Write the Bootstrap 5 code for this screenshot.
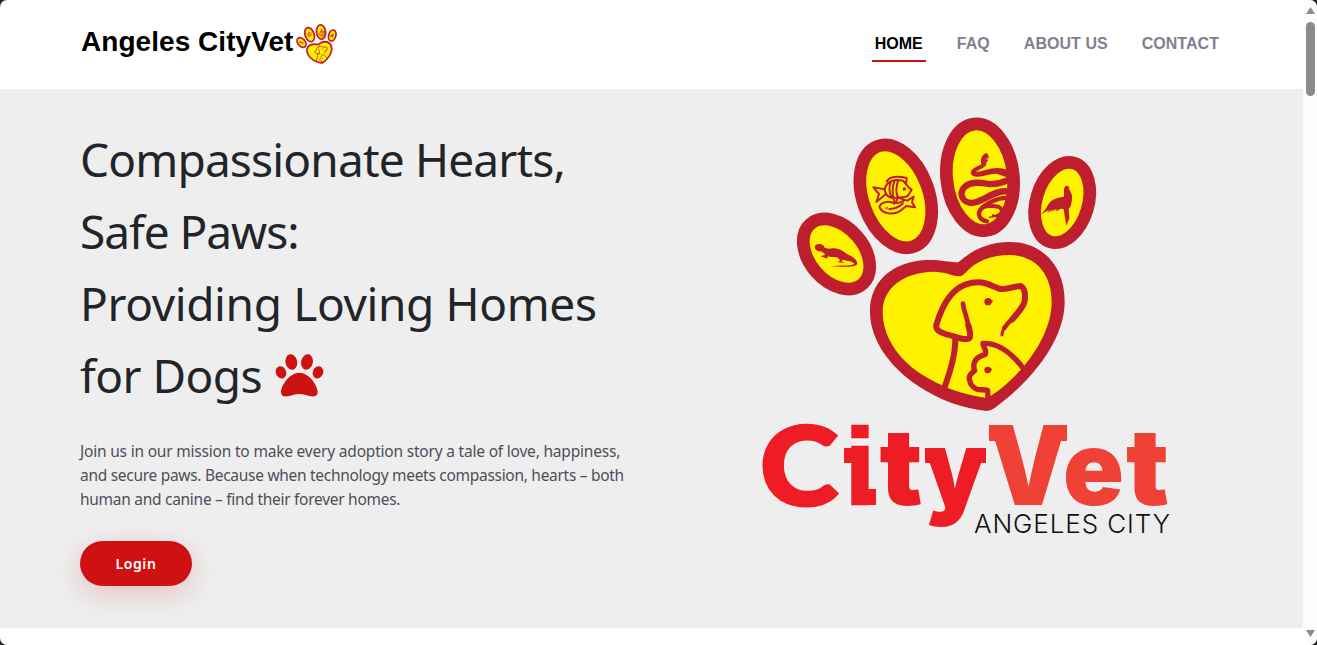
<!DOCTYPE html>
<html lang="en">
<head>
<meta charset="utf-8">
<meta name="viewport" content="width=device-width, initial-scale=1">
<title>Angeles CityVet</title>
<link href="https://cdn.jsdelivr.net/npm/bootstrap@5.3.0/dist/css/bootstrap.min.css" rel="stylesheet">
<style>
  body { font-family: "Noto Sans", "Open Sans", sans-serif; background: #222; }
  .window { height: 645px; background: #fff; border-radius: 7px; }
  .wrap { padding-left: 80px; padding-right: 80px; }
  .site-header { height: 89px; font-family: "Liberation Sans", Arial, sans-serif; }
  .site-header .navbar-brand { font-size: 28px; font-weight: 700; color: #000; line-height: 42px; letter-spacing: .05px; padding: 0 0 0 1px; margin: 21px 0 0; }
  .brand-paw { width: 41px; height: 40px; margin: 3px 0 0 3px; }
  .menu { margin-top: 29px; gap: 28px; padding-right: 1px; }
  .menu .nav-link { font-size: 16px; font-weight: 700; color: #7f7f8f; padding: 3px 3px 4px; line-height: 24px; border-bottom: 2px solid transparent; white-space: nowrap; letter-spacing: .04px; }
  .menu .nav-link.active { color: #000; border-color: #ce1212; }
  .hero { height: 539px; background: #eee; }
  .hero-copy { width: 600px; padding-top: 34px; }
  .hero h1 { font-size: 46px; font-weight: 400; line-height: 72px; color: #212529; margin: 0; white-space: nowrap; }
  .hero h1 span { display: block; }
  .hero h1 .h-a { letter-spacing: -.83px; }
  .hero h1 .h-b { letter-spacing: -1.05px; }
  .hero h1 .h-c { letter-spacing: -.37px; }
  .hero h1 .h-d { letter-spacing: -.55px; }
  .hero h1 svg { width: 49px; height: 43px; margin-left: 2px; vertical-align: -4px; }
  .hero p { margin: 28px 0 30px; font-size: 15.5px; line-height: 24px; color: #4f4f59; white-space: nowrap; }
  .hero p span { display: block; }
  .p-a { letter-spacing: -.2px; }
  .p-b { letter-spacing: -.29px; }
  .p-c { letter-spacing: -.28px; }
  .btn-login { width: 112px; height: 45px; background: #ce1212; color: #fff; font-size: 14px; font-weight: 600; letter-spacing: .6px; line-height: 45px; padding: 0; border: 0; box-shadow: 0 8px 28px rgba(206,18,18,.2); }
  .hero-logo { width: 440px; height: 450px; margin: 11px 33px 0 0; }
  .rail { width: 14px; background: #fcfcfc; padding: 7px 0 8px 3px; border-radius: 0 7px 7px 0; }
  .rail svg { width: 9px; height: 7px; }
  .thumb { width: 9px; height: 74px; background: #8b8b8b; margin-top: 8px; }
</style>
</head>
<body class="overflow-hidden">
<div class="window d-flex overflow-hidden">
  <div class="flex-grow-1">
    <header class="site-header wrap d-flex justify-content-between align-items-start">
      <a class="navbar-brand d-flex" href="#">Angeles CityVet
        <svg class="brand-paw" viewBox="797 118 299 294"><use href="#paw"/></svg>
      </a>
      <nav class="nav menu">
        <a class="nav-link active" href="#">HOME</a>
        <a class="nav-link" href="#">FAQ</a>
        <a class="nav-link" href="#">ABOUT US</a>
        <a class="nav-link" href="#">CONTACT</a>
      </nav>
    </header>
    <main class="hero wrap d-flex justify-content-between align-items-start">
      <div class="hero-copy">
        <h1><span class="h-a">Compassionate Hearts,</span><span class="h-b">Safe Paws:</span><span class="h-c">Providing Loving Homes</span><span class="h-d">for Dogs <svg viewBox="0 0 147 129" fill="#ce1212"><ellipse cx="18" cy="55" rx="15.500" ry="19" transform="rotate(-22 18 55)"/><ellipse cx="49" cy="24" rx="17.500" ry="23.500" transform="rotate(-12 49 24)"/><ellipse cx="96" cy="24" rx="17.500" ry="23.500" transform="rotate(12 96 24)"/><ellipse cx="129" cy="55" rx="15.500" ry="19" transform="rotate(22 129 55)"/><path d="M73 56C43 56 18 95 18 114C18 132 38 128 54 123Q73 117 92 123C108 128 128 132 128 114C128 95 103 56 73 56Z"/></svg></span></h1>
        <p><span class="p-a">Join us in our mission to make every adoption story a tale of love, happiness,</span><span class="p-b">and secure paws. Because when technology meets compassion, hearts – both</span><span class="p-c">human and canine – find their forever homes.</span></p>
        <a class="btn btn-login rounded-pill" href="#">Login</a>
      </div>
      <svg class="hero-logo" viewBox="750 100 440 450">
        <defs>
          <g id="paw">
            <g fill="#fff200" stroke="#be1e2d" stroke-width="12.7">
              <ellipse cx="836.500" cy="254" rx="27.200" ry="39.800" transform="rotate(-41 836.500 254)"/>
              <ellipse cx="895.800" cy="196.300" rx="33" ry="53.300" transform="rotate(-19.700 895.800 196.300)"/>
              <ellipse cx="980" cy="177.300" rx="33.300" ry="53.500" transform="rotate(-6.300 980 177.300)"/>
              <ellipse cx="1062.200" cy="202.500" rx="26" ry="41.200" transform="rotate(16.700 1062.200 202.500)"/>
            </g>
            <!-- lizard and fish -->
            <g transform="translate(780 110) scale(.33333)" fill="none" stroke="#be1e2d" stroke-width="6" stroke-linecap="round" stroke-linejoin="round">
              <path fill="#be1e2d" stroke="none" d="M104 411C104 400 124 399 131 407C132 414 138 416 150 416C170 411 185 419 200 431C220 441 232 450 232 461C229 472 190 471 152 469C175 465 210 469 223 462C218 452 204 454 188 449L185 454L194 459L172 456L181 452L172 442C155 442 145 438 142 440L143 446L122 439L136 434C127 424 122 423 117 424C110 422 104 417 104 411Z"/>
              <path d="M314 238C320 210 350 206 370 213L384 230Q389 236 395 239L383 258C370 264 350 263 337 264C324 261 315 252 314 238ZM314 238L280 232L297 252L289 276L315 254M320 214C332 196 360 199 380 204L379 218M333 215Q323 238 334 261M344 212Q332 240 343 274Q347 284 350 272L354 263Q344 240 354 213M298 290C306 274 330 272 343 281M298 290C305 311 342 320 367 298L379 288L405 292L396 277L401 260L382 272L362 266M328 297Q350 298 369 280M352 280L374 271"/>
              <circle cx="373" cy="237" r="2"/><circle cx="320" cy="294" r="1"/>
            </g>
            <!-- snake and bird -->
            <g transform="translate(930 110) scale(.33333)" fill="none" stroke="#be1e2d" stroke-linecap="round" stroke-linejoin="round">
              <path stroke-width="12" d="M166 145Q160 158 163 163C151 175 129 176 128 188C143 200 177 176 207 180Q226 181 230 189"/>
              <path stroke-width="12" d="M131 192C147 202 177 181 204 186L232 196"/>
              <path stroke-width="19" d="M232 211C215 219 200 224 175 222C140 215 116 216 101 234C86 255 100 277 123 279C159 278 190 240 231 244"/>
              <path stroke-width="13" d="M232 264C203 262 168 281 153 297C138 315 153 331 171 334"/>
              <path stroke-width="12" d="M158 291Q180 286 206 290Q220 298 214 309"/>
              <path fill="#be1e2d" stroke-width="4" d="M178 322L190 320L187 315L197 316L212 308L204 322"/>
              <path fill="#be1e2d" stroke="none" d="M154 163C150 146 156 132 171 129L176 139L174 151L165 165Z"/><circle cx="171" cy="147" r="1" stroke="#fff200" stroke-width="2"/>
              <path fill="#be1e2d" stroke="none" d="M402 236Q405 224 414 228L420 236L415 235Q428 252 426 266Q425 288 416 297L418 325L409 347L404 317L401 298C391 292 386 303 376 303L381 296L363 305L370 297L352 309L358 299L334 313Q348 298 356 281Q366 265 402 260Z"/>
            </g>
            <!-- heart with dog and cat -->
            <g transform="translate(860 230) scale(.33333)">
              <path fill="#be1e2d" d="M295 97C270 97 240 89 200 90C90 95 29 160 30 245C30 330 90 410 170 465C240 512 310 535 380 543Q392 543 405 533C500 465 614 340 614 215C614 100 540 36 450 36C380 36 335 62 295 97Z"/>
              <path fill="#fff200" d="M297 139C275 137 255 125 220 125C130 127 68 175 68 245C68 320 115 385 180 430C240 470 310 495 375 503L385 502C470 450 575 330 575 215C575 130 525 76 450 75C390 75 345 95 315 130Q305 140 297 139Z"/>
              <g fill="none" stroke="#be1e2d" stroke-width="18" stroke-linecap="round" stroke-linejoin="round">
                <path d="M325 286C330 302 335 326 323 327C303 330 283 318 260 313C235 306 226 298 229 285C242 240 266 181 318 163C366 147 389 166 415 175C438 184 463 167 482 168C497 174 497 206 492 220C486 237 471 251 457 268"/>
                <path stroke-width="14" d="M325 290C323 265 310 239 309 221M487 226C475 251 444 276 433 294"/>
                <path stroke-width="9" d="M443 280Q427 297 426 315"/>
                <path d="M286 326C286 380 268 430 253 474"/>
                <path stroke-width="16" d="M489 414C452 365 415 338 369 340C369 354 381 358 376 373C350 380 335 396 344 422C325 437 324 443 333 463C348 486 365 476 383 481L384 507"/>
              </g>
              <circle cx="384" cy="215" r="11" fill="#be1e2d"/><path fill="#be1e2d" d="M384 204L400 213L386 226ZM384 410L397 418L386 430Z"/><circle cx="383" cy="420" r="10" fill="#be1e2d"/>
            </g>
          </g>
        </defs>
        <use href="#paw"/>
        <g font-family="Inter, sans-serif" font-weight="900" font-size="104">
          <g fill="#ee1c25">
            <text x="760" y="505" font-family="Lato, sans-serif" font-size="109" stroke="#ee1c25" stroke-width="3" textLength="78" lengthAdjust="spacingAndGlyphs">C</text>
            <text x="845" y="504" font-family="Liberation Sans, sans-serif" font-weight="700" font-size="108" stroke="#ee1c25" stroke-width="2.500" textLength="30">i</text>
            <text x="879.500" y="505" font-size="107" textLength="43" lengthAdjust="spacingAndGlyphs">t</text>
            <text x="924" y="505" textLength="63" lengthAdjust="spacingAndGlyphs">y</text>
            <!-- serifs of the wordmark -->
            <path d="M844 448H862V463H844ZM862 489H876V505H862ZM925 448H940V463H925ZM970 448H986V463H970Z"/>
          </g>
          <g fill="#ef4136">
            <text x="988" y="505" font-size="110" textLength="80" lengthAdjust="spacingAndGlyphs">V</text>
            <text x="1063" y="505" textLength="61" lengthAdjust="spacingAndGlyphs">e</text>
            <text x="1126" y="505" font-size="107" textLength="43" lengthAdjust="spacingAndGlyphs">t</text>
            <path d="M989 425H1006V441H989ZM1050 425H1067V441H1050Z"/>
          </g>
        </g>
        <text x="974" y="533" font-family="Inter, sans-serif" font-weight="300" font-size="26" textLength="196" fill="#111">ANGELES CITY</text>
      </svg>
    </main>
  </div>
  <div class="rail d-flex flex-column">
    <svg viewBox="0 0 9 7"><path d="M4.500 0L9 7H0Z" fill="#8b8b8b"/></svg>
    <div class="thumb rounded-pill"></div>
    <svg class="mt-auto" viewBox="0 0 9 7"><path d="M0 0H9L4.500 7Z" fill="#8b8b8b"/></svg>
  </div>
</div>
<script src="https://cdn.jsdelivr.net/npm/bootstrap@5.3.0/dist/js/bootstrap.bundle.min.js"></script>
</body>
</html>
